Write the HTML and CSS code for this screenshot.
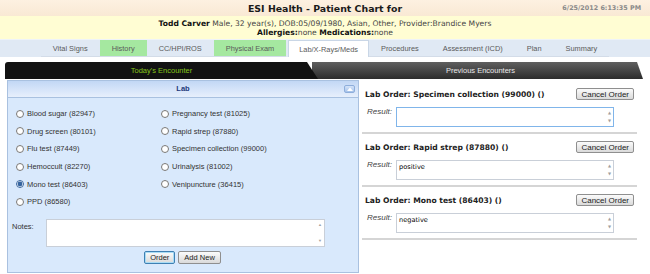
FILE: index.html
```html
<!DOCTYPE html>
<html lang="en">
<head>
    <meta charset="UTF-8">
    <title>ESI Health - Patient Chart</title>
    <link rel="stylesheet" href="styles.css">
</head>
<body>

    <!-- Chart header -->
    <div class="top">
        <span></span>
        <h1>ESI Health - Patient Chart for</h1>
        <span class="date">6/25/2012 6:13:35 PM</span>
    </div>

    <div class="patient">
        <div><b>Todd Carver</b> Male, 32 year(s), DOB:05/09/1980, Asian, Other, Provider:Brandice Myers</div>
        <div><b>Allergies:</b>none <b>Medications:</b>none</div>
    </div>

    <!-- Section tabs -->
    <div class="tabs">
        <a class="tab">Vital Signs</a>
        <a class="tab done">History</a>
        <a class="tab">CC/HPI/ROS</a>
        <a class="tab done">Physical Exam</a>
        <a class="tab active">Lab/X-Rays/Meds</a>
        <a class="tab">Procedures</a>
        <a class="tab">Assessment (ICD)</a>
        <a class="tab">Plan</a>
        <a class="tab">Summary</a>
    </div>

    <div class="encounters">
        <div class="enc today">Today's Encounter</div>
        <div class="enc previous">Previous Encounters</div>
    </div>

    <div class="main">
        <!-- Lab picker -->
        <div class="panel">
            <div class="panel-head">
                Lab
                <span class="collapse">
                    <svg width="6" height="4" viewBox="0 0 6 4"><path d="M0 4 L3 0.5 L6 4 Z" fill="#fff"/></svg>
                </span>
            </div>
            <div class="panel-body">
                <div class="labs">
                    <label><input type="radio" name="lab">Blood sugar (82947)</label>
                    <label><input type="radio" name="lab">Pregnancy test (81025)</label>
                    <label><input type="radio" name="lab">Drug screen (80101)</label>
                    <label><input type="radio" name="lab">Rapid strep (87880)</label>
                    <label><input type="radio" name="lab">Flu test (87449)</label>
                    <label><input type="radio" name="lab">Specimen collection (99000)</label>
                    <label><input type="radio" name="lab">Hemoccult (82270)</label>
                    <label><input type="radio" name="lab">Urinalysis (81002)</label>
                    <label><input type="radio" name="lab" checked>Mono test (86403)</label>
                    <label><input type="radio" name="lab">Venipuncture (36415)</label>
                    <label><input type="radio" name="lab">PPD (86580)</label>
                </div>
                <div class="notes">
                    <span>Notes:</span>
                    <div class="field"><textarea></textarea></div>
                </div>
                <div class="actions">
                    <button class="btn focus">Order</button>
                    <button class="btn">Add New</button>
                </div>
            </div>
        </div>

        <!-- Orders placed -->
        <div class="orders">
            <div class="order">
                <div class="order-head">
                    <span>Lab Order: Specimen collection (99000) ()</span>
                    <button class="btn">Cancel Order</button>
                </div>
                <div class="result">
                    <i>Result:</i>
                    <div class="field"><textarea class="focused"></textarea></div>
                </div>
            </div>
            <div class="order">
                <div class="order-head">
                    <span>Lab Order: Rapid strep (87880) ()</span>
                    <button class="btn">Cancel Order</button>
                </div>
                <div class="result">
                    <i>Result:</i>
                    <div class="field"><textarea>positive</textarea></div>
                </div>
            </div>
            <div class="order">
                <div class="order-head">
                    <span>Lab Order: Mono test (86403) ()</span>
                    <button class="btn">Cancel Order</button>
                </div>
                <div class="result">
                    <i>Result:</i>
                    <div class="field"><textarea>negative</textarea></div>
                </div>
            </div>
        </div>
    </div>

</body>
</html>
```

FILE: styles.css
```css
/* Common Styles */
body {
    margin: 0;
    font-family: 'DejaVu Sans', Verdana, sans-serif;
    font-size: 8px;
    color: #222;
    background: #fff;
    width: 650px;
    height: 274px;
    overflow: hidden;
}

/* Header */
.top {
    display: grid;
    grid-template-columns: 1fr auto 1fr;
    align-items: center;
    height: 16px;
    background: linear-gradient(#fdf1e1, #f9e9d4);
}

.top h1 {
    margin: 0;
    font-size: 9.4px;
    font-weight: bold;
    color: #1a1a1a;
}

.date {
    text-align: right;
    padding-right: 9px;
    font-size: 6.4px;
    font-weight: bold;
    color: #8a8a8a;
}

.patient {
    background: #fffdd3;
    text-align: center;
    font-size: 7.6px;
    line-height: 9px;
    padding: 3px 0 2px;
    color: #444;
    white-space: nowrap;
}

.patient b {
    color: #111;
}

/* Section tabs */
.tabs {
    display: flex;
    justify-content: center;
    height: 18px;
    background: #e0e9f4;
    border-top: 1px solid #eef3f9;
    box-sizing: border-box;
    font-family: 'Liberation Sans', Arial, sans-serif;
    font-size: 7.4px;
    color: #5a5a5a;
}

.tab {
    display: flex;
    align-items: center;
    padding: 0 12px;
    white-space: nowrap;
    border-bottom: 1px solid #d3dce8;
}

.tab.done {
    background: #a5e8a0;
}

.tab.active {
    padding: 0 10px;
    background: #fff;
    border: 1px solid #c9d6e6;
    border-bottom: none;
    margin-left: 2px;
}

/* Encounter tabs */
.encounters {
    display: flex;
    margin: 5px 7px 0 5px;
    height: 17px;
    font-family: 'Liberation Sans', Arial, sans-serif;
    font-size: 7.5px;
}

.enc {
    display: flex;
    align-items: center;
    justify-content: center;
}

.today {
    position: relative;
    z-index: 1;
    width: 313px;
    background: #121212;
    color: #86c51b;
    border-radius: 3px 0 0 0;
    clip-path: polygon(0 0, 302px 0, 313px 100%, 0 100%);
}

.previous {
    flex: 1;
    margin-left: -6px;
    padding-left: 6px;
    background: linear-gradient(#5f5f5f, #2c2c2c);
    color: #e8e8e8;
    border-radius: 0 5px 0 0;
    clip-path: polygon(0 0, calc(100% - 6px) 0, 100% 100%, 0 100%);
}

/* Main area */
.main {
    display: grid;
    grid-template-columns: 352px 275px;
    gap: 3px;
    padding-left: 7px;
}

.panel {
    margin-top: 1px;
    border: 1px solid #a9c1e0;
    height: 193px;
    box-sizing: border-box;
    background: #d9e9fc;
    font-family: 'Liberation Sans', Arial, sans-serif;
    font-size: 7.5px;
    color: #333;
}

.panel-head {
    position: relative;
    height: 16px;
    line-height: 16px;
    text-align: center;
    font-weight: bold;
    color: #22387a;
    background: linear-gradient(#c2d7f5, #e7effc);
    border-bottom: 1px solid #a9c1e0;
}

.collapse {
    position: absolute;
    right: 3px;
    top: 4px;
    width: 11px;
    height: 8px;
    box-sizing: border-box;
    display: flex;
    align-items: center;
    justify-content: center;
    border: 1px solid #8eaedb;
    border-radius: 2px;
    background: linear-gradient(#d4e3f9, #a6c2ea);
}

.panel-body {
    padding: 7px 0 0 8px;
}

.labs {
    display: grid;
    grid-template-columns: 145px 1fr;
}

.labs label {
    display: flex;
    align-items: center;
    height: 17.6px;
    white-space: nowrap;
}

.labs input {
    margin: 0 3px 0 0;
    width: 8px;
    height: 8px;
    accent-color: #35649f;
}

.notes {
    display: flex;
    align-items: flex-start;
    margin: 8px 0 0 -4px;
}

.notes span {
    width: 34px;
    padding-top: 3px;
}

/* Text boxes with the little scroll arrows */
.field {
    position: relative;
    display: flex;
}

.field::before,
.field::after {
    position: absolute;
    right: 3px;
    font-size: 4px;
    color: #a0a0a0;
    line-height: 4px;
}

.field::before {
    content: "\25B2";
    top: 4px;
}

.field::after {
    content: "\25BC";
    bottom: 4px;
}

textarea {
    resize: none;
    border: 1px solid #c9cfd8;
    background: #fff;
    font-family: 'DejaVu Sans', sans-serif;
    font-size: 6.6px;
    padding: 2px 12px 2px 2px;
    box-sizing: border-box;
    overflow: hidden;
}

.notes textarea {
    width: 279px;
    height: 28px;
}

.actions {
    display: flex;
    justify-content: center;
    gap: 3px;
    margin-top: 4px;
    padding-right: 9px;
}

.btn {
    font-family: 'Liberation Sans', Arial, sans-serif;
    font-size: 7.5px;
    height: 13px;
    padding: 0 5px;
    border: 1px solid #8f8f8f;
    border-radius: 2px;
    background: linear-gradient(#fbfbfb, #dadada);
    color: #222;
    white-space: nowrap;
}

.btn.focus {
    border-color: #3f80b3;
    box-shadow: inset 0 0 0 1px #a9dcf5;
}

/* Orders column */
.orders {
    padding-top: 9px;
}

.order {
    border-bottom: 2px solid #d5d5d5;
    padding-bottom: 5px;
    margin-bottom: 7px;
}

.order-head {
    display: flex;
    justify-content: space-between;
    align-items: center;
    height: 12px;
    font-weight: bold;
    font-size: 7.6px;
    padding: 0 3px;
    white-space: nowrap;
}

.order-head .btn {
    height: 12px;
    font-size: 8px;
    padding: 0 4px;
}

.result {
    display: flex;
    align-items: flex-start;
    margin-top: 7px;
    padding-left: 5px;
}

.result i {
    width: 29px;
    font-family: 'Liberation Sans', Arial, sans-serif;
    font-size: 8px;
    color: #444;
}

.result textarea {
    width: 218px;
    height: 20px;
}

.result textarea.focused {
    border-color: #80b5ea;
}
```
